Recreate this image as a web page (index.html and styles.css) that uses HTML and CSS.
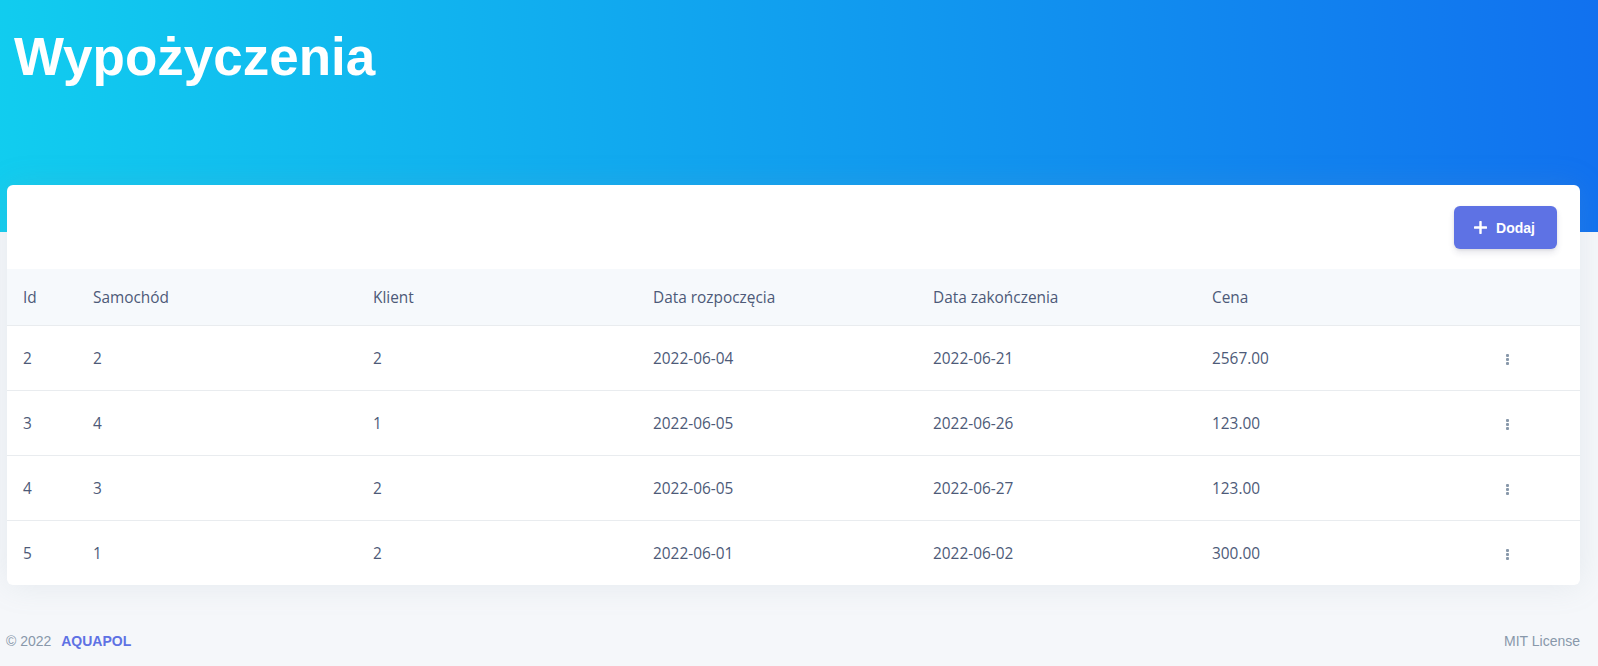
FILE: index.html
```html
<!DOCTYPE html>
<html lang="pl">
<head>
<meta charset="utf-8">
<title>Wypożyczenia</title>
<link rel="stylesheet" href="styles.css">
</head>
<body>
<header class="hero">
  <h1 class="hero-title">Wypożyczenia</h1>
</header>
<main class="content">
  <section class="card">
    <div class="card-header">
      <button class="btn-add" type="button">
        <svg class="btn-icon" viewBox="0 0 14 14" width="13" height="13" aria-hidden="true"><path d="M7 1v12M1 7h12" stroke="#fff" stroke-width="2.6" stroke-linecap="round"/></svg>
        <span>Dodaj</span>
      </button>
    </div>
    <table class="table">
      <colgroup>
        <col class="c-id"><col class="c-wide"><col class="c-wide"><col class="c-wide"><col class="c-wide2"><col class="c-price"><col class="c-act">
      </colgroup>
      <thead>
        <tr><th>Id</th><th>Samochód</th><th>Klient</th><th>Data rozpoczęcia</th><th>Data zakończenia</th><th>Cena</th><th></th></tr>
      </thead>
      <tbody>
        <tr><td>2</td><td>2</td><td>2</td><td>2022-06-04</td><td>2022-06-21</td><td>2567.00</td><td><span class="dots"><i></i><i></i><i></i></span></td></tr>
        <tr><td>3</td><td>4</td><td>1</td><td>2022-06-05</td><td>2022-06-26</td><td>123.00</td><td><span class="dots"><i></i><i></i><i></i></span></td></tr>
        <tr><td>4</td><td>3</td><td>2</td><td>2022-06-05</td><td>2022-06-27</td><td>123.00</td><td><span class="dots"><i></i><i></i><i></i></span></td></tr>
        <tr><td>5</td><td>1</td><td>2</td><td>2022-06-01</td><td>2022-06-02</td><td>300.00</td><td><span class="dots"><i></i><i></i><i></i></span></td></tr>
      </tbody>
    </table>
  </section>
  <footer class="footer">
    <div class="copy">© 2022 <a class="brand" href="#">AQUAPOL</a></div>
    <a class="license" href="#">MIT License</a>
  </footer>
</main>
</body>
</html>
```
FILE: styles.css
```css
html, body {
  margin: 0;
  padding: 0;
}
body {
  background: #f5f7fa;
  font-family: "Open Sans", "Liberation Sans", sans-serif;
  color: #525f7f;
  min-height: 666px;
}
.hero {
  height: 232px;
  box-sizing: border-box;
  padding: 27px 14px 0;
  background: linear-gradient(87deg, #11cdef 0%, #1171ef 100%);
}
.hero-title {
  margin: 0;
  font-family: "Liberation Sans", Arial, sans-serif;
  font-weight: 700;
  font-size: 53px;
  line-height: 60px;
  color: #fff;
}
.content {
  margin-top: -47px;
  padding: 0 18px 0 7px;
}
.card {
  background: #fff;
  border-radius: 6px;
  box-shadow: 0 0 2rem 0 rgba(136, 152, 170, 0.15);
  overflow: hidden;
}
.card-header {
  display: flex;
  justify-content: flex-end;
  padding: 21px 23px 20px;
}
.btn-add {
  display: flex;
  align-items: center;
  gap: 9px;
  height: 43px;
  padding: 0 22px 0 20px;
  border: 0;
  border-radius: 6px;
  background: #5e72e4;
  color: #fff;
  font-family: "Liberation Sans", Arial, sans-serif;
  font-weight: 700;
  font-size: 14px;
  box-shadow: 0 4px 6px rgba(50, 50, 93, 0.11), 0 1px 3px rgba(0, 0, 0, 0.08);
}
.btn-icon {
  display: block;
}
.table {
  width: 100%;
  border-collapse: collapse;
  table-layout: fixed;
}
.c-id { width: 70px; }
.c-wide { width: 280px; }
.c-wide2 { width: 279px; }
.c-price { width: 294px; }
.c-act { width: auto; }
.table th {
  background: #f6f9fc;
  height: 56px;
  padding: 0 0 0 16px;
  text-align: left;
  font-weight: 500;
  font-size: 15.4px;
  color: #4d5a78;
  border-bottom: 1px solid #e9ecef;
}
.table td {
  height: 64px;
  padding: 0 0 0 16px;
  font-size: 15.4px;
  color: #4d5a78;
  border-bottom: 1px solid #e9ecef;
}
.table tbody tr:last-child td {
  border-bottom: 0;
}
.dots {
  display: inline-flex;
  flex-direction: column;
  gap: 1px;
  margin-left: 0;
  vertical-align: middle;
}
.dots i {
  display: block;
  width: 3px;
  height: 3px;
  border-radius: 1px;
  background: #8898aa;
}
.footer {
  display: flex;
  justify-content: space-between;
  align-items: center;
  padding: 48px 0 0 0;
  margin-left: -1px;
  font-family: "Liberation Sans", Arial, sans-serif;
  font-size: 14px;
}
.copy {
  color: #8898aa;
}
.brand {
  margin-left: 6px;
  color: #5e72e4;
  font-weight: 700;
  text-decoration: none;
}
.license {
  color: #8898aa;
  text-decoration: none;
}
```
